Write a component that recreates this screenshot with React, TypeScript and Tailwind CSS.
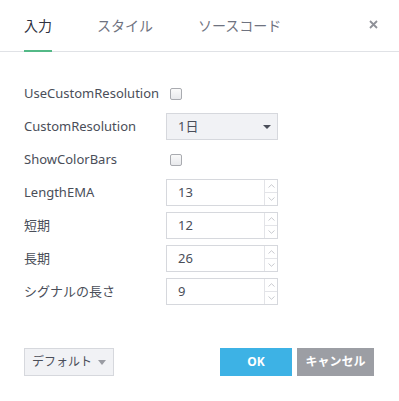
import React from "react";

const FONT = { fontFamily: '"Noto Sans", "Noto Sans CJK JP", sans-serif' };

function Checkbox() {
  return (
    <div className="ml-[4px] h-[12px] w-[12px] rounded-[2px] border border-[#a9abb0] bg-gradient-to-b from-[#fafafa] to-[#e8e9ec]" />
  );
}

function Spinner({ value }: { value: string }) {
  return (
    <div className="flex h-[27px] w-[112px] border border-[#d6d8dd] bg-white">
      <div className="flex flex-1 items-center pl-[11px] text-[13px] text-[#4a4e59]">{value}</div>
      <div className="flex w-[13px] flex-col border-l border-[#e3e4e8]">
        <div className="flex flex-1 items-center justify-center border-b border-[#e3e4e8]">
          <svg width="7" height="4" viewBox="0 0 7 4">
            <path d="M0.5 3.5 L3.5 0.7 L6.5 3.5" fill="none" stroke="#c3c5cb" strokeWidth="0.9" />
          </svg>
        </div>
        <div className="flex flex-1 items-center justify-center">
          <svg width="7" height="4" viewBox="0 0 7 4">
            <path d="M0.5 0.5 L3.5 3.3 L6.5 0.5" fill="none" stroke="#c3c5cb" strokeWidth="0.9" />
          </svg>
        </div>
      </div>
    </div>
  );
}

function Row({ label, children }: { label: string; children: React.ReactNode }) {
  return (
    <div className="flex h-[33px] items-center">
      <div className="w-[142px] text-[13px] text-[#4a4e59]">{label}</div>
      <div className="flex items-center">{children}</div>
    </div>
  );
}

export default function App() {
  return (
    <div className="h-[401px] w-[399px] bg-white" style={FONT}>
      <div className="flex h-[52px] items-center border-b border-[#e0e2e6] pl-6 pr-[21px]">
        <div className="relative flex h-full items-center text-[14px] text-[#2f3241]">
          入力
          <div className="absolute bottom-[-1px] left-0 right-0 h-[2px] bg-[#53b987]" />
        </div>
        <div className="ml-[45px] flex h-full items-center text-[14px] text-[#6f7380]">スタイル</div>
        <div className="ml-[45px] flex h-full items-center text-[14px] text-[#6f7380]">ソースコード</div>
        <div className="ml-auto flex h-full items-center">
          <svg width="9" height="9" viewBox="0 0 9 9" className="mt-[-3px]">
            <path d="M1 1 L8 8 M8 1 L1 8" stroke="#8f9198" strokeWidth="1.8" />
          </svg>
        </div>
      </div>

      <div className="px-6 pt-[25px]">
        <Row label="UseCustomResolution">
          <Checkbox />
        </Row>
        <Row label="CustomResolution">
          <div className="flex h-[27px] w-[112px] items-center justify-between border border-[#d6d8dd] bg-[#f1f2f5] pl-[11px] pr-[6px] text-[13px] text-[#4a4e59]">
            <span>1日</span>
            <svg width="8" height="4" viewBox="0 0 8 4">
              <path d="M0 0 L8 0 L4 4 Z" fill="#4a4e59" />
            </svg>
          </div>
        </Row>
        <Row label="ShowColorBars">
          <Checkbox />
        </Row>
        <Row label="LengthEMA">
          <Spinner value="13" />
        </Row>
        <Row label="短期">
          <Spinner value="12" />
        </Row>
        <Row label="長期">
          <Spinner value="26" />
        </Row>
        <Row label="シグナルの長さ">
          <Spinner value="9" />
        </Row>
      </div>

      <div className="mt-[40px] flex items-center justify-between pl-6 pr-[25px]">
        <div className="flex h-[28px] w-[90px] items-center justify-center gap-[6px] border border-[#d6d8dd] bg-[#f1f2f5] text-[12px] text-[#4a4e59]">
          <span>デフォルト</span>
          <svg width="8" height="5" viewBox="0 0 8 5">
            <path d="M0 0 L8 0 L4 5 Z" fill="#9a9ca3" />
          </svg>
        </div>
        <div className="flex gap-[5px]">
          <div className="flex h-[28px] w-[72px] items-center justify-center bg-[#3db2e5] text-[12px] font-bold text-white">
            OK
          </div>
          <div className="flex h-[28px] w-[77px] items-center justify-center bg-[#9c9ea4] text-[12px] font-bold text-white">
            キャンセル
          </div>
        </div>
      </div>
    </div>
  );
}
